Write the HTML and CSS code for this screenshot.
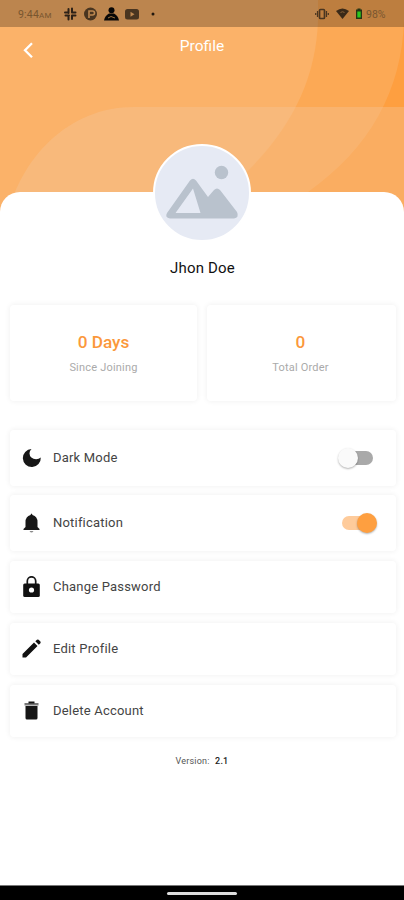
FILE: index.html
```
<!DOCTYPE html>
<html lang="en">
<head>
    <meta charset="UTF-8">
    <meta name="viewport" content="width=device-width, initial-scale=1.0">
    <title>Profile</title>
    <link rel="stylesheet" href="styles.css">
</head>
<body>

<header class="header">
    <!-- Curved background shapes -->
    <svg class="header-bg" viewBox="0 0 404 220" aria-hidden="true">
        <rect width="404" height="220" fill="#fe9f40"/>
        <path d="M0 0H404V20C402 90 370 148 308 192L280 220H0Z" fill="#fca955"/>
        <path d="M0 0H318V20C316 85 286 140 225 192L190 220H0Z" fill="#fbb269"/>
        <path d="M6 220C20 158 68 107 134 107H404V220Z" fill="#f5c598" fill-opacity=".38"/>
    </svg>

    <div class="status-bar">
        <span class="time">9:44<small>AM</small></span>
        <svg class="status-left" width="96" height="16" viewBox="0 0 96 16">
            <g stroke="#2c2117" stroke-width="2" stroke-linecap="round">
                <path d="M5.5 3V7M2 6.5H5M9 2.5V6M9 6.5H12.5M2.5 9.5H6M5.5 10V13.5M9 9.5V13M9.5 9.5H12.5"/>
            </g>
            <circle cx="27.500" cy="8" r="6.500" fill="#493520"/>
            <path d="M26 12V5H29.500A2 2 0 0 1 29.500 9H27" fill="none" stroke="#bd8850" stroke-width="1.600"/>
            <circle cx="48.500" cy="4.300" r="3" fill="#080706"/>
            <path d="M41 14.500C41.500 11 43.500 9 46 7.500H51C53.500 9 55.500 11 56 14.500Z" fill="#080706"/>
            <path d="M45 12L48 10.500L52 12" fill="none" stroke="#9c713e"/>
            <rect x="62" y="3" width="14" height="10.500" rx="2.500" fill="#493520"/>
            <path d="M67.500 5.800V10.700L71.500 8.200Z" fill="#bd8850"/>
            <circle cx="90" cy="8" r="1.500" fill="#20170e"/>
        </svg>
        <svg class="status-right" width="50" height="16" viewBox="0 0 50 16">
            <rect x="4.500" y="3.500" width="5" height="9" rx="1" fill="none" stroke="#493520" stroke-width="1.700"/>
            <path d="M2.500 5V11M11.500 5V11M.7 7V9M13.300 7V9" stroke="#493520" stroke-width="1.200"/>
            <path d="M21 5Q27.500 0 34 5L27.500 13Z" fill="#3b2a18"/>
            <path d="M25.500 6.500Q27.500 5 29.500 6.500" fill="none" stroke="#8a6238"/>
            <path d="M41 3.500H42.500V2.500H45.500V3.500H47V13H41Z" fill="#263413"/>
            <rect x="42.300" y="5.500" width="3.400" height="6" fill="#2cc91d"/>
        </svg>
        <span class="battery">98%</span>
    </div>

    <div class="title-bar">
        <svg class="back" width="12" height="18" viewBox="0 0 12 18">
            <path d="M10 2.200L3 9.200L10 16.200" fill="none" stroke="#fff" stroke-width="2.300"/>
        </svg>
        <h1>Profile</h1>
    </div>
</header>

<main class="content">
    <div class="avatar">
        <svg width="94" height="94" viewBox="0 0 94 94">
            <circle cx="66.500" cy="26.500" r="6.700" fill="#b9c2cd"/>
            <path fill-rule="evenodd" d="M35 34.500Q38 31 41 34.500L53 51L59 44Q62 41 65 44L82 66Q84.500 71.500 79 72.500H15Q9.500 71.500 12 67ZM38 42.500L20.500 67H45.500Z" fill="#b9c2cd"/>
        </svg>
    </div>
    <h2>Jhon Doe</h2>

    <section class="stats">
        <div class="card stat">
            <strong>0 Days</strong>
            <span>Since Joining</span>
        </div>
        <div class="card stat">
            <strong>0</strong>
            <span>Total Order</span>
        </div>
    </section>

    <!-- Settings list -->
    <section class="menu">
        <div class="card row tall">
            <svg class="icon" width="20" height="20" viewBox="0 0 20 20"><path d="M9.500 1A9 9 0 1 0 18.800 9.500A6.300 5.600 0 0 1 9.500 1Z" fill="#171717"/></svg>
            <span class="label">Dark Mode</span>
            <span class="switch"></span>
        </div>
        <div class="card row tall">
            <svg class="icon" width="20" height="20" viewBox="0 0 20 20"><path d="M8.500 2Q9.500 -1 10.500 2Q15.500 3.500 15.500 9V14L17.500 16V17H1.500V16L3.500 14V9Q3.500 3.500 8.500 2Z" fill="#171717"/><path d="M7.500 18H11.500Q9.500 21 7.500 18Z" fill="#888"/></svg>
            <span class="label">Notification</span>
            <span class="switch on"></span>
        </div>
        <div class="card row">
            <svg class="icon" width="20" height="22" viewBox="0 0 20 22"><path d="M5.300 9V5A4.200 4.200 0 0 1 13.700 5V9" fill="none" stroke="#171717" stroke-width="1.700"/><rect x="1.200" y="7.500" width="16.600" height="13.500" rx="1.500" fill="#111"/><circle cx="9.500" cy="14" r="2.600" fill="#fff"/></svg>
            <span class="label">Change Password</span>
        </div>
        <div class="card row">
            <svg class="icon" width="20" height="20" viewBox="0 0 20 20"><path d="M.5 15L12 3.500L15.500 7L4 18.500H.5ZM13.300 2.300L15 .8Q15.800 .2 16.600 .8L18.400 2.600Q19 3.400 18.400 4.200L16.800 5.800Z" fill="#111"/></svg>
            <span class="label">Edit Profile</span>
        </div>
        <div class="card row">
            <svg class="icon" width="20" height="20" viewBox="0 0 20 20"><path d="M2.500 2H16.500V4.500H2.500Z" fill="#777"/><path d="M6.500 .5H12.500V2.500H6.500ZM3.500 5H15.500V17Q15.500 18.500 14 18.500H5Q3.500 18.500 3.500 17Z" fill="#151515"/></svg>
            <span class="label">Delete Account</span>
        </div>
    </section>

    <p class="version">Version: <b>2.1</b></p>
</main>

<footer class="nav-bar"><span></span></footer>

</body>
</html>
```
FILE: styles.css
```
* {
    box-sizing: border-box;
}

body {
    margin: 0;
    height: 900px;
    display: flex;
    flex-direction: column;
    background-color: #fff;
    color: #333;
    font-family: Roboto, "Liberation Sans", sans-serif;
    overflow: hidden;
}

/* Header */
.header {
    position: relative;
    height: 192px;
    flex: none;
}

.header-bg {
    position: absolute;
    top: 0;
    left: 0;
    width: 404px;
    height: 220px;
}

.status-bar {
    position: relative;
    height: 27px;
    padding: 1px 16px 0 18px;
    display: flex;
    align-items: center;
    background-color: rgba(0, 0, 0, 0.25);
    color: #79562f;
    font-size: 10.5px;
}

.time {
    width: 45px;
    letter-spacing: 0.2px;
}

.time small {
    font-size: 8px;
}

.status-right {
    margin-left: auto;
}

.battery {
    width: 22px;
    margin-left: 1px;
    font-size: 10.5px;
}

.title-bar {
    position: relative;
    height: 40px;
    display: flex;
    justify-content: center;
}

.back {
    position: absolute;
    left: 22px;
    top: 14px;
}

h1 {
    margin: 10px 0 0;
    color: #fff;
    font-size: 15.5px;
    line-height: 19px;
    font-weight: 400;
}

/* White sheet */
.content {
    position: relative;
    flex: 1;
    padding: 0 8px;
    border-radius: 20px 20px 0 0;
    background-color: #fff;
}

.avatar {
    width: 98px;
    height: 98px;
    margin: -48px auto 0;
    border: 2px solid #fff;
    border-radius: 50%;
    background-color: #e6eaf4;
}

.avatar svg {
    display: block;
}

h2 {
    margin: 16px 0 0;
    padding-left: 1px;
    text-align: center;
    color: #111;
    font-size: 15px;
    line-height: 20px;
    font-weight: 400;
    letter-spacing: 0.2px;
}

.card {
    border-radius: 4px;
    background-color: #fff;
    box-shadow: 0 0 5px 1px rgba(0, 0, 0, 0.05);
}

/* Stats */
.stats {
    margin: 27px 0 0 2px;
    width: 386px;
    display: flex;
    gap: 10px;
}

.stat {
    flex: 1;
    height: 96px;
    padding-top: 26px;
    display: flex;
    flex-direction: column;
    align-items: center;
}

.stat:last-child {
    padding-right: 2px;
}

.stat strong {
    color: #fb983b;
    font-size: 17.2px;
    line-height: 22px;
    font-weight: 500;
}

.stat span {
    margin-top: 7px;
    color: #aaa;
    font-size: 11px;
    line-height: 16px;
    letter-spacing: 0.2px;
}

/* Menu */
.menu {
    margin: 29px 0 0 2px;
    width: 386px;
    display: flex;
    flex-direction: column;
    gap: 10px;
}

.row {
    height: 52px;
    padding: 0 19px 0 12px;
    display: flex;
    align-items: center;
}

.row.tall {
    height: 56px;
}

.row.tall + .row.tall {
    margin-top: -1px;
}

.icon {
    margin-right: 11px;
}

.label {
    padding-bottom: 2px;
    font-size: 13px;
    letter-spacing: 0.2px;
    color: #444;
}

.switch {
    position: relative;
    width: 31px;
    height: 14px;
    margin-left: auto;
    margin-right: 4px;
    border-radius: 7px;
    background-color: #a9a9a9;
}

.switch::before {
    content: "";
    position: absolute;
    top: -3px;
    left: -4px;
    width: 20px;
    height: 20px;
    border-radius: 50%;
    background-color: #fafafa;
    box-shadow: 0 1px 2px rgba(0, 0, 0, 0.3);
}

.switch.on {
    background-color: #fecb9b;
}

.switch.on::before {
    left: 15px;
    background-color: #fe9f40;
}

.version {
    margin: 18px 0 0;
    text-align: center;
    font-size: 9px;
    line-height: 12px;
    letter-spacing: 0.2px;
    color: #555;
}

.version b {
    margin-left: 3px;
    font-weight: 500;
    color: #222;
}

/* System navigation */
.nav-bar {
    height: 15px;
    flex: none;
    display: flex;
    justify-content: center;
    align-items: center;
    border-top: 1px solid #777;
    background-color: #000;
}

.nav-bar span {
    width: 70px;
    height: 3px;
    margin-top: 1px;
    border-radius: 2px;
    background-color: #ddd;
}
```
